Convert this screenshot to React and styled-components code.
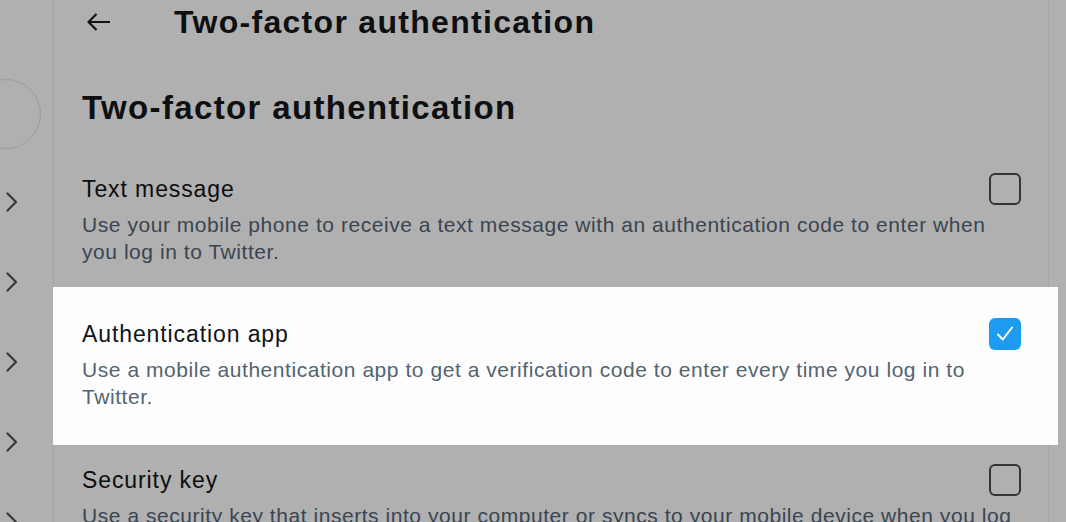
import React from 'react';
import styled, { createGlobalStyle } from 'styled-components';

const GlobalStyle = createGlobalStyle`
  html, body {
    margin: 0;
    padding: 0;
    background: #b0b0b0;
    overflow: hidden;
  }
  body {
    font-family: "Liberation Sans", Arial, sans-serif;
    color: #0e0f10;
  }
`

const Page = styled('div')`
  display: flex;
  width: 1066px;
  height: 522px;
  overflow: hidden;
`

const Sidebar = styled('aside')`
  width: 53px;
  flex-shrink: 0;
  border-right: 1px solid #a4a4a4;
  display: flex;
  flex-direction: column;
`

const Avatar = styled('div')`
  width: 68px;
  height: 68px;
  margin: 79px 0 0 -29px;
  border-radius: 50%;
  border: 1px solid #9c9c9c;
  flex-shrink: 0;
`

const MenuList = styled('div')`
  display: flex;
  flex-direction: column;
  margin-top: 13px;
  flex-shrink: 0;
`

const MenuItem = styled('div')`
  height: 80px;
  flex-shrink: 0;
  display: flex;
  align-items: center;
  padding-left: 6px;
  color: #35393d;
`

const Main = styled('main')`
  width: 994px;
  flex-shrink: 0;
  border-right: 1px solid #a4a4a4;
  display: flex;
  flex-direction: column;
`

const Header = styled('header')`
  height: 44px;
  flex-shrink: 0;
  display: flex;
  align-items: center;
  padding-left: 33px;
  gap: 63px;
`

const BackButton = styled('button')`
  background: none;
  border: 0;
  padding: 0;
  width: 24px;
  height: 24px;
  display: flex;
  align-items: center;
  color: #141414;
`

const HeaderTitle = styled('h2')`
  margin: 0;
  font-size: 32px;
  font-weight: 700;
  letter-spacing: 1.3px;
  line-height: 40px;
`

const PageTitle = styled('h1')`
  flex-shrink: 0;
  margin: 44px 0 26px 28px;
  font-size: 33px;
  font-weight: 800;
  letter-spacing: 1.35px;
  line-height: 40px;
`

const Option = styled('div')`
  flex-shrink: 0;
  position: relative;
  padding: ${p => p.$active ? '33px 37px 35px 29px' : '21px 27px 34px 28px'};
  margin: ${p => p.$active ? '-12px -10px 0 -1px' : '0'};
  background: ${p => p.$active ? '#fdfdfd' : 'transparent'};
`

const OptionHead = styled('div')`
  height: 28px;
  display: flex;
  align-items: center;
  justify-content: space-between;
`

const OptionTitle = styled('span')`
  font-size: 23px;
  letter-spacing: 0.9px;
  color: ${p => p.$active ? '#0f1419' : '#0c0d0e'};
`

const OptionText = styled('p')`
  margin: 8px 0 0;
  max-width: 930px;
  font-size: 21px;
  line-height: 27px;
  letter-spacing: 0.55px;
  color: ${p => p.$active ? '#536471' : '#3a4550'};
`

const Checkbox = styled('span')`
  width: 32px;
  height: 32px;
  box-sizing: border-box;
  border-radius: 6px;
  display: flex;
  align-items: center;
  justify-content: center;
  border: ${p => p.$checked ? 'none' : '2.5px solid #2f3539'};
  background: ${p => p.$checked ? '#1d9bf0' : 'transparent'};
`

const Chevron = () => (
  <svg width="12" height="20" viewBox="0 0 12 20" fill="none">
    <path d="M1.5 1.5 L10 10 L1.5 18.5" stroke="currentColor" strokeWidth="2.2" strokeLinecap="round" strokeLinejoin="round" />
  </svg>
)

const options = [
  {
    title: 'Text message',
    text: 'Use your mobile phone to receive a text message with an authentication code to enter when you log in to Twitter.',
    checked: false,
  },
  {
    title: 'Authentication app',
    text: 'Use a mobile authentication app to get a verification code to enter every time you log in to Twitter.',
    checked: true,
  },
  {
    title: 'Security key',
    text: 'Use a security key that inserts into your computer or syncs to your mobile device when you log in to Twitter. You’ll need to use a supported mobile device or web browser.',
    checked: false,
  },
]

export default function App() {
  return (
    <>
      <GlobalStyle />
      <Page>
        <Sidebar>
          <Avatar />
          <MenuList>
            {[0, 1, 2, 3, 4].map(i => (
              <MenuItem key={i}><Chevron /></MenuItem>
            ))}
          </MenuList>
        </Sidebar>
        <Main>
          <Header>
            <BackButton aria-label="Back">
              <svg width="24" height="20" viewBox="0 0 24 20" fill="none">
                <path d="M23 10 H2 M9.5 2 L1.5 10 L9.5 18" stroke="currentColor" strokeWidth="2.2" strokeLinejoin="miter" />
              </svg>
            </BackButton>
            <HeaderTitle>Two-factor authentication</HeaderTitle>
          </Header>
          <PageTitle>Two-factor authentication</PageTitle>
          {options.map(o => (
            <Option key={o.title} $active={o.checked}>
              <OptionHead>
                <OptionTitle $active={o.checked}>{o.title}</OptionTitle>
                <Checkbox $checked={o.checked}>
                  {o.checked && (
                    <svg width="24" height="24" viewBox="0 0 24 24" fill="none">
                      <path d="M5 12.5 L9.8 17.5 L19 5.5" stroke="#fff" strokeWidth="2" strokeLinecap="round" strokeLinejoin="round" />
                    </svg>
                  )}
                </Checkbox>
              </OptionHead>
              <OptionText $active={o.checked}>{o.text}</OptionText>
            </Option>
          ))}
        </Main>
      </Page>
    </>
  )
}
